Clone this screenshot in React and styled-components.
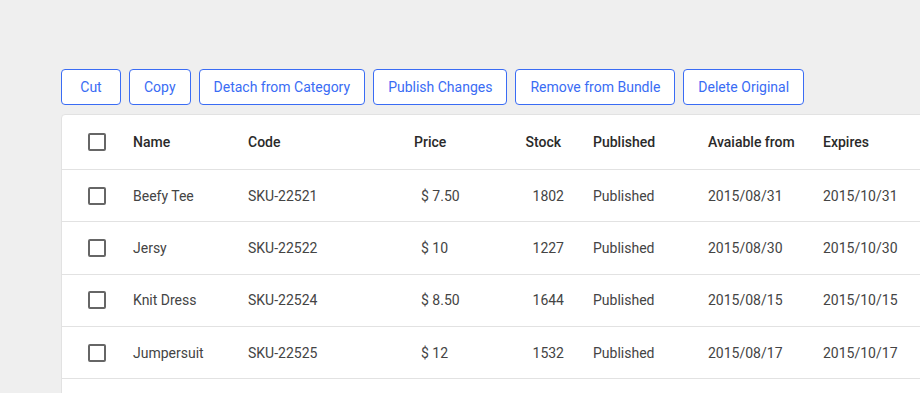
import React, { useState } from "react";
import styled, { createGlobalStyle } from "styled-components";

const actions = [
  "Cut",
  "Copy",
  "Detach from Category",
  "Publish Changes",
  "Remove from Bundle",
  "Delete Original",
];

const products = [
  { name: "Beefy Tee", code: "SKU-22521", price: "$ 7.50", stock: 1802, from: "2015/08/31", expires: "2015/10/31" },
  { name: "Jersy", code: "SKU-22522", price: "$ 10", stock: 1227, from: "2015/08/30", expires: "2015/10/30" },
  { name: "Knit Dress", code: "SKU-22524", price: "$ 8.50", stock: 1644, from: "2015/08/15", expires: "2015/10/15" },
  { name: "Jumpersuit", code: "SKU-22525", price: "$ 12", stock: 1532, from: "2015/08/17", expires: "2015/10/17" },
];

const App = () => {
  const [checked, setChecked] = useState({});

  const toggle = (code) => setChecked((c) => ({ ...c, [code]: !c[code] }));

  return (
    <>
      <GlobalStyle />
      <Page>
        <Toolbar>
          {actions.map((a) => (
            <ActionButton key={a}>{a}</ActionButton>
          ))}
        </Toolbar>
        <Card>
          <HeadRow>
            <CheckCell>
              <Checkbox type="checkbox" />
            </CheckCell>
            <Cell>Name</Cell>
            <Cell>Code</Cell>
            <Cell>Price</Cell>
            <Cell align="right" pr={32}>Stock</Cell>
            <Cell>Published</Cell>
            <Cell>Avaiable from</Cell>
            <Cell>Expires</Cell>
          </HeadRow>
          {products.map((p) => (
            <Row key={p.code}>
              <CheckCell>
                <Checkbox
                  type="checkbox"
                  checked={!!checked[p.code]}
                  onChange={() => toggle(p.code)}
                />
              </CheckCell>
              <Cell>{p.name}</Cell>
              <Cell>{p.code}</Cell>
              <Cell pl={7}>{p.price}</Cell>
              <Cell align="right" pr={29}>{p.stock}</Cell>
              <Cell>Published</Cell>
              <Cell>{p.from}</Cell>
              <Cell>{p.expires}</Cell>
            </Row>
          ))}
          <Row />
        </Card>
      </Page>
    </>
  );
};

export default App;

// styles
const GlobalStyle = createGlobalStyle`
  html, body {
    margin: 0;
    background: #efefef;
    overflow: hidden;
  }
  body {
    font-family: Roboto, "Liberation Sans", sans-serif;
  }
`;

const Page = styled.div`
  padding: 69px 0 0 61px;
  width: 1100px;
`;

const Toolbar = styled.div`
  display: flex;
  gap: 8px;
  margin-bottom: 9px;
`;

const ActionButton = styled.button`
  min-width: 60px;
  height: 36px;
  padding: 0 14px;
  border: 1px solid #3a6cf4;
  border-radius: 4px;
  background: #fff;
  color: #3a6cf4;
  font-family: inherit;
  font-size: 14px;
  cursor: pointer;
`;

const Card = styled.div`
  background: #fff;
  border: 1px solid #e2e2e2;
  border-radius: 4px 0 0 0;
  width: 1000px;
`;

const cols = "71px 115px 166px 104px 75px 115px 115px 1fr";

const Row = styled.div`
  display: grid;
  grid-template-columns: ${cols};
  align-items: center;
  box-sizing: border-box;
  height: 52.3px;
  border-bottom: 1px solid #e2e2e2;
  color: #444;
  font-size: 14px;
`;

const HeadRow = styled(Row)`
  height: 55px;
  color: #2a2a2a;
  font-weight: 500;
`;

const CheckCell = styled.div`
  padding-left: 26px;
  display: flex;
  align-items: center;
`;

const Cell = styled.div`
  padding-left: ${(p) => p.pl || 0}px;
  padding-right: ${(p) => p.pr || 0}px;
  text-align: ${(p) => p.align || "left"};
  white-space: nowrap;
`;

const Checkbox = styled.input`
  appearance: none;
  width: 18px;
  height: 18px;
  margin: 0;
  border: 2px solid #666;
  border-radius: 2px;
  background: #fff;
  cursor: pointer;

  &:checked {
    background: #666;
  }
`;
